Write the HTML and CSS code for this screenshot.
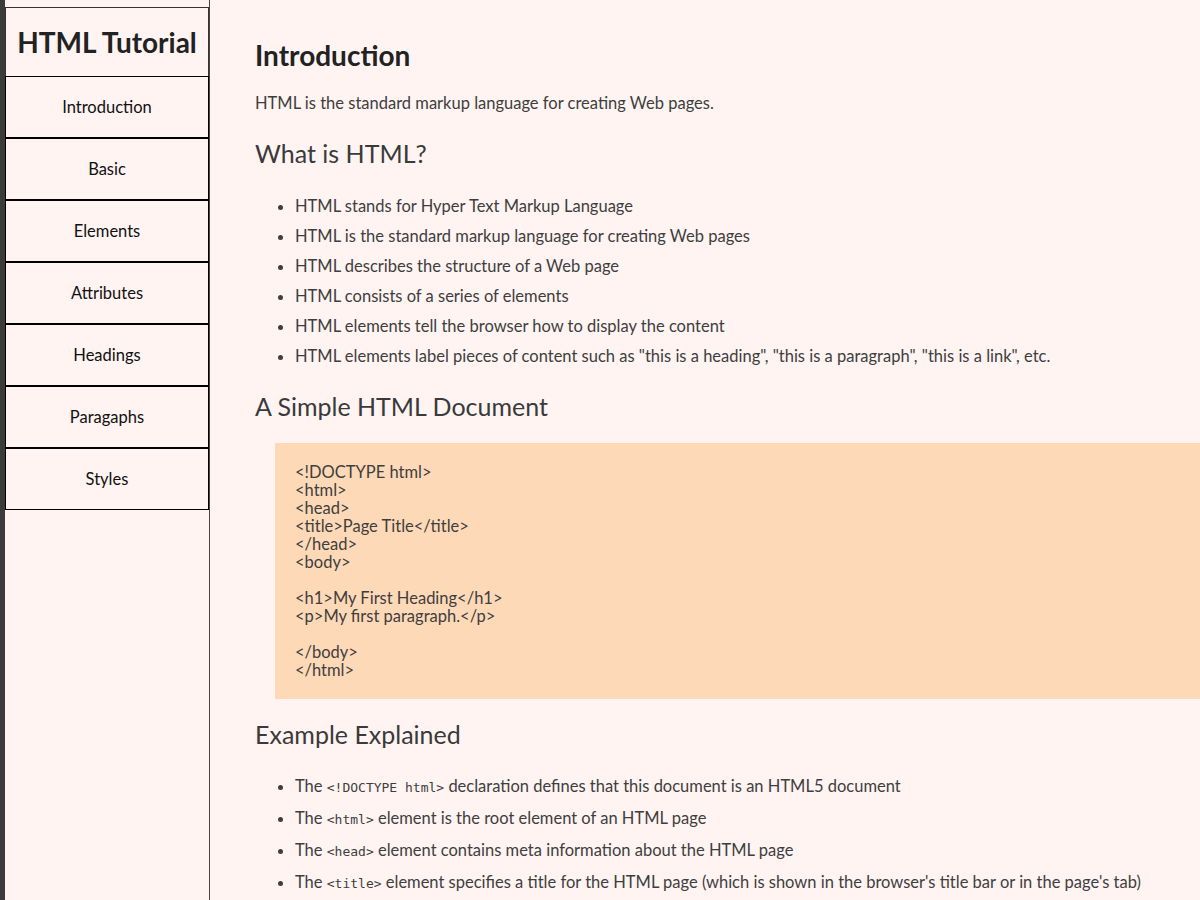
FILE: index.html
```html
<!DOCTYPE html>
<html lang="en">
<head>
<meta charset="utf-8">
<title>HTML Tutorial</title>
<link rel="stylesheet" href="styles.css">
</head>
<body>
<div class="layout">
  <aside class="sidebar">
    <div class="brand">HTML Tutorial</div>
    <nav class="nav">
      <a class="nav-item" href="#">Introduction</a>
      <a class="nav-item" href="#">Basic</a>
      <a class="nav-item" href="#">Elements</a>
      <a class="nav-item" href="#">Attributes</a>
      <a class="nav-item" href="#">Headings</a>
      <a class="nav-item" href="#">Paragaphs</a>
      <a class="nav-item" href="#">Styles</a>
    </nav>
  </aside>
  <main class="content">
    <h1 class="title">Introduction</h1>
    <p class="lead">HTML is the standard markup language for creating Web pages.</p>
    <h2 class="section">What is HTML?</h2>
    <ul class="list">
      <li>HTML stands for Hyper Text Markup Language</li>
      <li>HTML is the standard markup language for creating Web pages</li>
      <li>HTML describes the structure of a Web page</li>
      <li>HTML consists of a series of elements</li>
      <li>HTML elements tell the browser how to display the content</li>
      <li>HTML elements label pieces of content such as "this is a heading", "this is a paragraph", "this is a link", etc.</li>
    </ul>
    <h2 class="section">A Simple HTML Document</h2>
    <pre class="code">&lt;!DOCTYPE html&gt;
&lt;html&gt;
&lt;head&gt;
&lt;title&gt;Page Title&lt;/title&gt;
&lt;/head&gt;
&lt;body&gt;

&lt;h1&gt;My First Heading&lt;/h1&gt;
&lt;p&gt;My first paragraph.&lt;/p&gt;

&lt;/body&gt;
&lt;/html&gt;</pre>
    <h2 class="section">Example Explained</h2>
    <ul class="list list-code">
      <li>The <code>&lt;!DOCTYPE html&gt;</code> declaration defines that this document is an HTML5 document</li>
      <li>The <code>&lt;html&gt;</code> element is the root element of an HTML page</li>
      <li>The <code>&lt;head&gt;</code> element contains meta information about the HTML page</li>
      <li>The <code>&lt;title&gt;</code> element specifies a title for the HTML page (which is shown in the browser's title bar or in the page's tab)</li>
    </ul>
  </main>
</div>
</body>
</html>
```
FILE: styles.css
```css
html, body {
  margin: 0;
  padding: 0;
  background: #fff4f2;
}

body {
  font-family: Lato, "Open Sans", sans-serif;
  color: #3e3e3e;
  overflow: hidden;
}

.layout {
  display: flex;
  min-height: 100vh;
  align-items: stretch;
}

.sidebar {
  flex: 0 0 204px;
  width: 204px;
  border-left: 5px solid #3b3b3b;
  border-right: 1px solid #4e4242;
  padding-top: 7px;
  display: flex;
  flex-direction: column;
}

.brand {
  height: 68px;
  border: 1px solid #333;
  border-bottom: none;
  display: flex;
  align-items: center;
  justify-content: center;
  font-size: 28px;
  font-weight: 700;
  color: #222;
}

.nav {
  display: flex;
  flex-direction: column;
}

.nav-item {
  height: 60px;
  border: 1px solid #000;
  display: flex;
  align-items: center;
  justify-content: center;
  font-size: 16.5px;
  color: #111;
  text-decoration: none;
}

.content {
  flex: 1;
  min-width: 0;
  padding: 38px 0 0 45px;
}

.title {
  margin: 0;
  font-size: 28px;
  line-height: 34px;
  font-weight: 700;
  color: #222;
}

.lead {
  margin: 19px 0 0;
  font-size: 16.5px;
  line-height: 24px;
}

.section {
  margin: 23px 0 0;
  font-size: 25px;
  line-height: 30px;
  font-weight: 400;
  color: #3a3a3a;
}

.list {
  margin: 26px 0 0;
  padding-left: 40px;
  font-size: 16.5px;
  line-height: 24px;
}

.list li {
  margin-bottom: 6px;
}

.list-code {
  margin-top: 24px;
}

.list-code li {
  line-height: 26px;
}

.list + .section {
  margin-top: 23px;
}

.code {
  margin: 22px 0 0 20px;
  padding: 20px;
  background: #fed9b7;
  font-family: Lato, "Open Sans", sans-serif;
  font-size: 16.5px;
  line-height: 18px;
  color: #3e3e3e;
}

.code + .section {
  margin-top: 20px;
}

code {
  font-family: "DejaVu Sans Mono", monospace;
  font-size: 13px;
  line-height: 1;
}
```
